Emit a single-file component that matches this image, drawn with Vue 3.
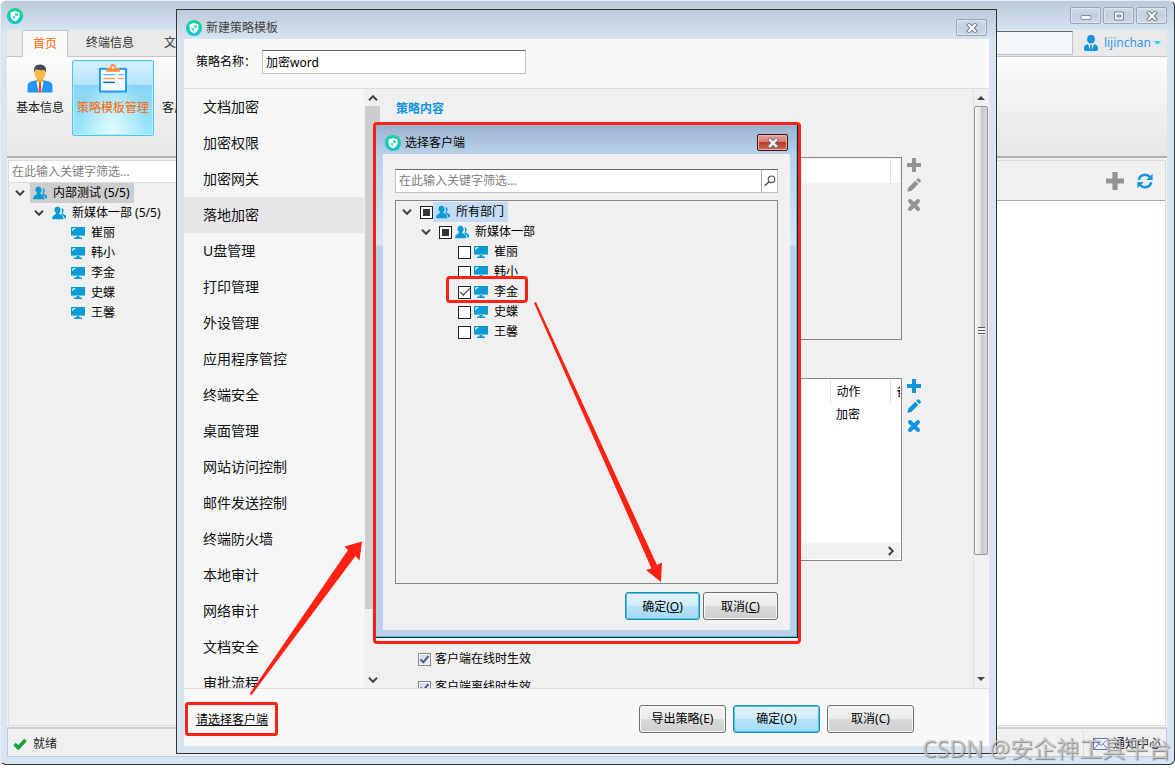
<template>
    <div class="desktop">
        <svg class="sprite" aria-hidden="true">
            <defs>
                <linearGradient id="teal" x1="0" y1="0" x2="0" y2="1">
                    <stop offset="0" stop-color="#12d690" />
                    <stop offset="1" stop-color="#0cc4d0" />
                </linearGradient>
            </defs>
            <symbol id="logo" viewBox="0 0 16 16">
                <circle cx="8" cy="8" r="8" fill="url(#teal)" />
                <path d="M8 3 L12.5 4.4 V8.2 Q12 11.5 8 13.4 Q4 11.5 3.5 8.2 V4.4Z" fill="#fff" />
                <path d="M8 5 L11 5.6 V8 H8Z M8 8 V11.4 Q5.8 10.2 5.2 8Z" fill="#4fdcc0" />
            </symbol>
            <symbol id="group" viewBox="0 0 14 14">
                <path d="M9.6 2 a2.4 2.6 0 0 1 0.8 4.9 q0.3 1.4 3.6 2.6 v3.1 h-1.4 q-0.2-2.8-3.2-3.9 q1.6-3.3 0.2-6.7z" fill="#0a9bd4" />
                <path d="M5.4 0.6 a3.3 3.5 0 0 1 1.7 6.5 q0.2 1.5 2.5 2.1 q1.9 0.8 1.9 4 h-11.5 q0-3.2 2-4 q2-0.6 2-2.1 a3.3 3.5 0 0 1 1.4-6.5z" fill="#0a9bd4" />
            </symbol>
            <symbol id="pc" viewBox="0 0 14 12">
                <path d="M0 0 H14 V9 H0Z M5.5 9 H8.5 V10.5 H11 V12 H3 V10.5 H5.5Z" fill="#0a9bd4" />
                <path d="M0 8 H14 V8.6 H0Z M1 4.5 L5 1 H2.2 L1 2.2Z" fill="#bde5f5" />
            </symbol>
            <symbol id="down" viewBox="0 0 10 6">
                <path d="M1 0.8 L5 4.8 L9 0.8" fill="none" stroke="#444" stroke-width="2" />
            </symbol>
            <symbol id="plus" viewBox="0 0 14 14">
                <path d="M5 0 H9 V5 H14 V9 H9 V14 H5 V9 H0 V5 H5Z" fill="currentColor" />
            </symbol>
            <symbol id="pen" viewBox="0 0 14 14">
                <path d="M0.3 13.8 L1.2 9.8 L8.3 2.8 L11.4 5.9 L4.3 12.9Z M9.2 1.9 L10.5 0.6 Q11.5 0 12.4 0.8 L13.5 1.9 Q14.3 2.8 13.5 3.8 L12.3 5Z" fill="currentColor" />
            </symbol>
            <symbol id="cross" viewBox="0 0 14 14">
                <path d="M3 3 L11 11 M11 3 L3 11" stroke="currentColor" stroke-width="4" stroke-linecap="round" />
            </symbol>
            <symbol id="winclose" viewBox="0 0 12 10">
                <path d="M3 2 L9 8 M9 2 L3 8" stroke="#69717f" stroke-width="4" stroke-linecap="square" />
                <path d="M3 2 L9 8 M9 2 L3 8" stroke="#f4f6f9" stroke-width="2.4" stroke-linecap="square" />
            </symbol>
        </svg>

        <!-- 主窗口 -->
        <div class="main-win">
            <div class="titlebar main-title">
                <svg class="logo"><use href="#logo" /></svg>
                <div class="win-btns">
                    <button class="win-btn" aria-label="最小化">
                        <svg width="12" height="10"><rect x="1" y="4.5" width="10" height="4" rx="1" fill="#f4f6f9" stroke="#858da0" /></svg>
                    </button>
                    <button class="win-btn" aria-label="最大化">
                        <svg width="12" height="10"><path d="M1.5 1 H10.5 V9 H1.5Z M4 4 V6 H8 V4Z" fill="#f4f6f9" fill-rule="evenodd" stroke="#7b8496" /></svg>
                    </button>
                    <button class="win-btn" aria-label="关闭">
                        <svg width="12" height="10"><use href="#winclose" /></svg>
                    </button>
                </div>
            </div>
            <div class="client-area">
                <div class="tabs">
                    <button class="tab on">首页</button>
                    <button class="tab">终端信息</button>
                    <button class="tab">文</button>
                    <input class="top-search" type="text" aria-label="搜索" />
                    <button class="user">
                        <svg width="14" height="16" viewBox="0 0 14 16">
                            <path d="M7 0 a3.8 4.2 0 0 1 0 8.6 a3.8 4.2 0 0 1 0-8.6z M4 9 L6 15 L6.2 11.5 L5.8 10 H8.2 L7.8 11.5 L8 15 L10 9 Q14 10 14 13.4 V14.5 Q14 16 12 16 H2 Q0 16 0 14.5 V13.4 Q0 10 4 9z" fill="#1095dc" />
                        </svg>
                        <span>lijinchan</span>
                        <svg width="7" height="4"><path d="M0 0 H7 L3.5 4Z" fill="#25dcf8" /></svg>
                    </button>
                </div>
                <div class="ribbon">
                    <button class="tool">
                        <svg width="26" height="28" viewBox="0 0 26 28">
                            <path d="M0.5 28 V22 Q0.5 17.5 5 16.7 L13 15 L21 16.7 Q25.5 17.5 25.5 22 V28Z" fill="#2196f3" />
                            <path d="M10 12 H16 V17 L13 20 L10 17Z" fill="#ffa726" />
                            <path d="M9.5 16.5 L13 19 L16.5 16.5 L14.5 28 H11.5Z" fill="#fff" />
                            <path d="M12 18 H14 L14.6 28 H11.4Z" fill="#e74c3c" />
                            <ellipse cx="13" cy="9" rx="5.5" ry="6.5" fill="#ffb74d" />
                            <path d="M7 8 Q6 0 13 0 Q20 0 19 8 L17.6 5.5 Q13 6 8.8 4.8Z" fill="#424b54" />
                        </svg>
                        <span>基本信息</span>
                    </button>
                    <button class="tool on">
                        <svg width="30" height="30" viewBox="0 0 30 30">
                            <rect x="1.5" y="5" width="27" height="23.5" fill="#f2fbff" stroke="#2196f3" stroke-width="2" />
                            <path d="M8 8 V4.5 H12 Q12 0 15 0 Q18 0 18 4.5 H22 V8Z" fill="#ff8a3c" />
                            <circle cx="15" cy="3.6" r="1.4" fill="#fff" />
                            <path d="M5 11 H17 M21 11 H26" stroke="#64b5f6" stroke-width="1.5" />
                            <path d="M5 15 H17 M20 15 H26" stroke="#ff9c55" stroke-width="1.5" />
                            <path d="M5 19 H17" stroke="#1c68a8" stroke-width="1.5" />
                        </svg>
                        <span>策略模板管理</span>
                    </button>
                    <button class="tool third"><span>客户</span></button>
                </div>
                <div class="work">
                    <div class="side">
                        <input class="side-search" type="text" placeholder="在此输入关键字筛选..." aria-label="筛选" />
                        <div class="row" v-for="item in mainTree" :class="'lv' + item.level">
                            <svg class="down" v-if="item.level < 3"><use href="#down" /></svg>
                            <span class="node" :class="{ sel: item.level == 1 }">
                                <svg class="ico-group" v-if="item.level < 3"><use href="#group" /></svg>
                                <svg class="ico-pc" v-else><use href="#pc" /></svg>
                                {{ item.name }}
                            </span>
                        </div>
                    </div>
                    <div class="panel">
                        <div class="panel-tools">
                            <button class="icon-btn gray" aria-label="新增"><svg width="18" height="18"><use href="#plus" /></svg></button>
                            <button class="icon-btn blue" aria-label="刷新">
                                <svg width="16" height="16" viewBox="0 0 16 16">
                                    <path d="M1.8 6.8 A6.3 6 0 0 1 13 4.2 M14.2 9.2 A6.3 6 0 0 1 3 11.8" fill="none" stroke="currentColor" stroke-width="2.4" />
                                    <path d="M15.6 0.8 V7 H9.4Z M0.4 15.2 V9 H6.6Z" fill="currentColor" />
                                </svg>
                            </button>
                        </div>
                    </div>
                </div>
                <div class="status">
                    <svg width="14" height="12" viewBox="0 0 14 12"><path d="M1.5 6 L5.3 9.8 L12.5 2" fill="none" stroke="#16a33a" stroke-width="3.6" /></svg>
                    <span>就绪</span>
                    <div class="notice">
                        <svg width="16" height="12" viewBox="0 0 16 12"><path d="M0.5 0.5 H15.5 V11.5 H0.5Z M0.5 0.5 L8 7.5 L15.5 0.5 M0.5 11.5 L6 5.8 M15.5 11.5 L10 5.8" fill="#eef4ff" stroke="#5b77bd" /></svg>
                        <span>通知中心</span>
                    </div>
                </div>
            </div>
        </div>

        <!-- 新建策略模板 -->
        <div class="dialog">
            <div class="titlebar">
                <svg class="logo"><use href="#logo" /></svg>
                <span class="title-text">新建策略模板</span>
                <button class="win-btn" aria-label="关闭"><svg width="12" height="10"><use href="#winclose" /></svg></button>
            </div>
            <div class="dialog-box">
                <div class="name-line">
                    <label for="policyName">策略名称：</label>
                    <input id="policyName" type="text" v-model="policyName" />
                </div>
                <div class="dialog-mid">
                    <div class="menu">
                        <button v-for="(m, index) in menus" class="menu-item" :class="{ on: index == current }" @click="current = index">{{ m }}</button>
                    </div>
                    <div class="flat-bar">
                        <svg class="down up"><use href="#down" /></svg>
                        <div class="flat-thumb"></div>
                        <svg class="down"><use href="#down" /></svg>
                    </div>
                    <div class="content">
                        <h3>策略内容</h3>
                        <div class="block">
                            <div class="list off">
                                <table>
                                    <thead><tr><th></th><th class="col-act plain"></th><th class="col-memo"></th></tr></thead>
                                </table>
                            </div>
                            <div class="ops gray">
                                <button class="icon-btn" v-for="o in ops" :aria-label="o.name"><svg width="14" height="14"><use :href="o.icon" /></svg></button>
                            </div>
                        </div>
                        <div class="block">
                            <div class="list">
                                <table>
                                    <thead><tr><th></th><th class="col-act">动作</th><th class="col-memo">备</th></tr></thead>
                                    <tbody><tr><td></td><td>加密</td><td></td></tr></tbody>
                                </table>
                                <div class="h-bar"><svg class="down right"><use href="#down" /></svg></div>
                            </div>
                            <div class="ops blue">
                                <button class="icon-btn" v-for="o in ops" :aria-label="o.name"><svg width="14" height="14"><use :href="o.icon" /></svg></button>
                            </div>
                        </div>
                        <div class="effects">
                            <label><input class="old-check" type="checkbox" v-model="online" />客户端在线时生效</label>
                            <label><input class="old-check" type="checkbox" v-model="offline" />客户端离线时生效</label>
                        </div>
                    </div>
                    <div class="aero-bar">
                        <svg width="8" height="4"><path d="M0 4 L4 0 L8 4Z" fill="#444" /></svg>
                        <div class="aero-thumb"><i></i></div>
                        <svg width="8" height="4"><path d="M0 0 H8 L4 4Z" fill="#444" /></svg>
                    </div>
                </div>
                <div class="dialog-foot">
                    <a class="pick" href="#">请选择客户端</a>
                    <button class="btn">导出策略(E)</button>
                    <button class="btn primary">确定(O)</button>
                    <button class="btn">取消(C)</button>
                </div>
            </div>
        </div>

        <!-- 选择客户端 -->
        <div class="mark-frame">
            <div class="picker">
                <div class="titlebar">
                    <svg class="logo"><use href="#logo" /></svg>
                    <span class="title-text">选择客户端</span>
                    <button class="win-btn red" aria-label="关闭"><svg width="12" height="10"><use href="#winclose" /></svg></button>
                </div>
                <div class="picker-box">
                    <div class="picker-search">
                        <input type="text" placeholder="在此输入关键字筛选..." aria-label="筛选客户端" />
                        <button aria-label="搜索">
                            <svg width="12" height="12" viewBox="0 0 12 12"><circle cx="7.5" cy="4.3" r="3.3" fill="none" stroke="#555" stroke-width="1.2" /><path d="M5 6.7 L0.8 10.8" stroke="#555" stroke-width="1.6" /></svg>
                        </button>
                    </div>
                    <div class="picker-tree">
                        <div class="row" v-for="item in clients" :class="['lv' + item.level, { marked: item.checked }]">
                            <svg class="down" v-if="item.level < 3"><use href="#down" /></svg>
                            <label>
                                <input class="check" type="checkbox" v-model="item.checked" :indeterminate.prop="item.level < 3" />
                                <span class="node" :class="{ sel: item.level == 1 }">
                                    <svg class="ico-group" v-if="item.level < 3"><use href="#group" /></svg>
                                    <svg class="ico-pc" v-else><use href="#pc" /></svg>
                                    {{ item.name }}
                                </span>
                            </label>
                        </div>
                    </div>
                    <div class="picker-foot">
                        <button class="btn primary">确定(<u>O</u>)</button>
                        <button class="btn">取消(<u>C</u>)</button>
                    </div>
                </div>
            </div>
        </div>

        <!-- 指引箭头 -->
        <svg class="arrows" width="1175" height="768" aria-hidden="true">
            <path d="M534 303 L536 302 L657 565 L662 562.5 L661 582 L646 570 L651.5 568.5Z" fill="#ff2113" />
            <path d="M249.5 694 L348 550 L344.5 546.5 L362 541.5 L359.5 560.5 L355.5 556 L251.5 695Z" fill="#ff2113" />
        </svg>
        <div class="watermark">CSDN @安企神工具平台</div>
    </div>
</template>

<script setup>
import { ref, reactive } from "vue"

const policyName = ref("加密word")
const current = ref(3)
const online = ref(true)
const offline = ref(true)

// 左侧策略菜单
const menus = [
    "文档加密", "加密权限", "加密网关", "落地加密", "U盘管理", "打印管理",
    "外设管理", "应用程序管控", "终端安全", "桌面管理", "网站访问控制",
    "邮件发送控制", "终端防火墙", "本地审计", "网络审计", "文档安全", "审批流程"
]

const ops = [
    { name: "添加", icon: "#plus" },
    { name: "编辑", icon: "#pen" },
    { name: "删除", icon: "#cross" }
]

// 主窗口的部门树
const mainTree = [
    { level: 1, name: "内部测试 (5/5)" },
    { level: 2, name: "新媒体一部 (5/5)" },
    { level: 3, name: "崔丽" },
    { level: 3, name: "韩小" },
    { level: 3, name: "李金" },
    { level: 3, name: "史蝶" },
    { level: 3, name: "王馨" }
]

// 可选择的客户端
const clients = reactive([
    { level: 1, name: "所有部门", checked: false },
    { level: 2, name: "新媒体一部", checked: false },
    { level: 3, name: "崔丽", checked: false },
    { level: 3, name: "韩小", checked: false },
    { level: 3, name: "李金", checked: true },
    { level: 3, name: "史蝶", checked: false },
    { level: 3, name: "王馨", checked: false }
])
</script>

<style>
body{
    margin: 0;
    background: #fff;
}
</style>

<style scoped>
.desktop, .desktop *, .desktop *::after{
    box-sizing: border-box;
}
.desktop{
    position: relative;
    display: flex;
    flex-direction: column;
    height: 100vh;
    padding-bottom: 3px;
    overflow: hidden;
    font: 12px/20px "Noto Sans", "Noto Sans CJK SC", sans-serif;
    color: #000;
}
.sprite{
    position: absolute;
    width: 0;
    height: 0;
}
button, input{
    font: inherit;
    color: inherit;
    margin: 0;
}
button{
    padding: 0;
    border: 0;
    background: none;
    white-space: nowrap;
}
svg{
    flex: none;
    display: block;
}
.logo{
    width: 16px;
    height: 16px;
}
.down{
    width: 10px;
    height: 6px;
}
.ico-group{
    width: 14px;
    height: 14px;
}
.ico-pc{
    width: 14px;
    height: 12px;
}
.gray{
    color: #939393;
}
.blue{
    color: #1296db;
}

/* 主窗口 */
.main-win{
    flex: 1;
    min-height: 0;
    display: flex;
    flex-direction: column;
    padding: 0 7px 7px 6px;
    background: #d7e4f2;
    border: 1px solid #333;
    border-top-color: #e6edf4;
    border-left-color: #e6edf4;
    border-radius: 6px;
    background-image: linear-gradient(#bccbd9, #d7e4f2 30px);
}
.titlebar{
    display: flex;
    align-items: center;
    height: 29px;
    flex: none;
}
.title-text{
    margin-left: 4px;
}
.win-btns{
    display: flex;
    gap: 2px;
    margin-left: auto;
}
.win-btn{
    display: flex;
    align-items: center;
    justify-content: center;
    width: 31px;
    height: 17px;
    margin-left: auto;
    border: 1px solid #9aa5b9;
    border-radius: 2px;
    background: linear-gradient(#cfdae6, #c3d0de 50%, #cddae8);
    box-shadow: inset 0 0 0 1px #dde6ef;
}
.win-btn.red{
    border-color: #4b1219;
    background: linear-gradient(#e3a79c, #d27b6d 50%, #bb3a22 50%, #cf6a50);
    box-shadow: inset 0 0 0 1px #e5b0a5;
}
.client-area{
    flex: 1;
    min-height: 0;
    display: flex;
    flex-direction: column;
    background: #f0f0f0;
}
.tabs{
    display: flex;
    align-items: flex-end;
    height: 27px;
    flex: none;
    padding-left: 15px;
    background: #e9e9e9;
    border-bottom: 1px solid #c5c5c5;
}
.tab{
    height: 26px;
    padding: 0 15px;
    color: #333;
}
.tab.on{
    height: 27px;
    margin-bottom: -1px;
    padding: 0 10px;
    background: #fafafa;
    border: 1px solid #c5c5c5;
    border-bottom: 0;
    border-radius: 2px 2px 0 0;
    color: #ff6600;
}
.tab.on + .tab{
    padding-left: 18px;
}
.top-search{
    width: 264px;
    height: 24px;
    margin: 0 11px 1px auto;
    border: 1px solid #c0c4ca;
    border-top: 1px solid #666;
    background: #f3f7fc;
}
.user{
    display: flex;
    align-items: center;
    gap: 6px;
    height: 26px;
    padding-right: 6px;
    color: #3399f0;
}
.user span{
    margin-right: -3px;
}
.ribbon{
    display: flex;
    align-items: flex-start;
    height: 101px;
    flex: none;
    padding: 3px 1px;
    background: linear-gradient(#fcfcfc, #f0f0f0 50%, #e6e6e6);
    border-bottom: 2px solid #b0b0b0;
}
.tool{
    display: flex;
    flex-direction: column;
    align-items: center;
    gap: 5px;
    width: 64px;
    height: 76px;
    padding-top: 4px;
    color: #222;
}
.tool svg{
    height: 29px;
}
.tool.on{
    width: 82px;
    border: 1px solid #4cc6ea;
    border-radius: 2px;
    padding-top: 3px;
    color: #ff6600;
    background: radial-gradient(ellipse at 50% 100%, #e2fbff, transparent 60%), linear-gradient(#d8f1fd, #b4e4f9 32%, #86d4f5 32%, #9fe6fb);
    box-shadow: inset 0 0 0 1px #b9ecfb;
}
.tool.third{
    width: 40px;
    padding-top: 38px;
}
.work{
    flex: 1;
    min-height: 0;
    display: grid;
    grid-template-columns: 200px 1fr;
    gap: 4px;
    padding: 2px 1px 1px;
}
.side{
    border: 1px solid #dcdcdc;
}
.side-search{
    display: block;
    width: 100%;
    height: 22px;
    padding: 0 3px;
    border: 0;
    border-bottom: 1px solid #ddd;
}
::placeholder{
    color: #808080;
    opacity: 1;
}
.row{
    display: flex;
    align-items: center;
    height: 20px;
    white-space: nowrap;
}
.node{
    display: flex;
    align-items: center;
    gap: 6px;
    height: 20px;
    padding: 0 4px 0 3px;
}
.side .row{
    gap: 5px;
    padding-left: 6px;
}
.side .row.lv2{
    padding-left: 25px;
}
.side .row.lv3{
    padding-left: 59px;
}
.side .sel{
    background: #cdcdcd;
}
.panel{
    display: flex;
    flex-direction: column;
    background: #fff;
    border: 1px solid #dcdcdc;
}
.panel-tools{
    display: flex;
    align-items: center;
    justify-content: flex-end;
    gap: 13px;
    height: 40px;
    padding-right: 12px;
    background: #f0f0f0;
    border-bottom: 1px solid #a8a8a8;
}
.status{
    display: flex;
    align-items: center;
    gap: 6px;
    height: 30px;
    flex: none;
    padding: 2px 0 0 5px;
    color: #222;
    border: 1px solid #b9cee5;
    border-top: 2px solid #d0d0d0;
}
.notice{
    display: flex;
    align-items: center;
    gap: 4px;
    height: 100%;
    margin-left: auto;
    padding: 0 5px 0 9px;
    border-left: 1px solid #ddd;
}

/* 新建策略模板窗口 */
.dialog{
    position: absolute;
    top: 9px;
    left: 176px;
    right: 178px;
    bottom: 14px;
    display: flex;
    flex-direction: column;
    padding: 0 7px 7px;
    border: 1px solid #333;
    background: linear-gradient(#bccad9, #d7e4f2 30px);
}
.dialog > .titlebar{
    padding: 6px 2px 0;
    color: #444;
}
.dialog-box{
    flex: 1;
    min-height: 0;
    display: flex;
    flex-direction: column;
    background: #f8f8f8;
}
.name-line{
    display: flex;
    align-items: center;
    gap: 6px;
    height: 50px;
    flex: none;
    padding: 0 12px 4px;
    border-bottom: 1px solid #ddd;
}
.name-line input{
    width: 264px;
    height: 24px;
    padding: 0 3px;
    border: 1px solid #bfc3c8;
    border-top-color: #666;
    background: #fff;
}
.dialog-mid{
    flex: 1;
    min-height: 0;
    display: flex;
    overflow: hidden;
    background: #f0f0f0;
}
.menu{
    width: 180px;
    flex: none;
    overflow: hidden;
    background: #f4f6f8;
}
.menu-item{
    display: block;
    width: 100%;
    height: 36px;
    padding-left: 19px;
    text-align: left;
    font-size: 14px;
    color: #111;
}
.menu-item.on{
    background: #e5e6e8;
}
.flat-bar{
    display: flex;
    flex-direction: column;
    align-items: center;
    width: 15px;
    margin-left: 1px;
    padding: 6px 0 5px;
}
.flat-thumb{
    width: 15px;
    flex: 1;
    margin: 5px 0 68px;
    background: #cdcdcd;
}
.up{
    transform: rotate(180deg);
}
.content{
    flex: 1;
    overflow: hidden;
    padding: 10px 52px 0 16px;
}
.content h3{
    margin: 0;
    font-size: 12px;
    line-height: 20px;
    color: #1296db;
}
.block{
    display: flex;
    gap: 5px;
    margin-top: 38px;
}
.list{
    flex: 1;
    display: flex;
    flex-direction: column;
    height: 183px;
    padding: 1px;
    border: 1px solid #828790;
    background: #fff;
}
.list.off{
    background: #f0f0f0;
}
table{
    width: 100%;
    table-layout: fixed;
    border-collapse: collapse;
}
th, td{
    height: 24px;
    padding: 0 0 0 6px;
    text-align: left;
    font-weight: normal;
    overflow: hidden;
    white-space: nowrap;
}
th{
    border-left: 1px solid #e0e0e0;
    background: #fff;
}
th:first-child, th.plain{
    border-left: 0;
}
td{
    height: 22px;
}
.col-act{
    width: 60px;
}
.col-memo{
    width: 10px;
}
.h-bar{
    display: flex;
    align-items: center;
    justify-content: flex-end;
    height: 16px;
    margin-top: auto;
    padding-right: 4px;
    background: #f0f0f0;
}
.right{
    transform: rotate(-90deg);
}
.ops{
    display: flex;
    flex-direction: column;
    gap: 6px;
    padding-top: 1px;
}
.icon-btn{
    color: inherit;
}
.icon-btn.gray{
    color: #939393;
}
.icon-btn.blue{
    color: #1296db;
}
.effects{
    display: flex;
    flex-direction: column;
    gap: 8px;
    margin-top: 88px;
    padding-left: 22px;
}
.effects label{
    display: flex;
    align-items: center;
    gap: 4px;
}
.old-check{
    appearance: none;
    width: 13px;
    height: 13px;
    border: 1px solid #8a8a8a;
    background: linear-gradient(135deg, #cfd6df, #f4f6f8);
    box-shadow: inset 0 0 0 1px #f4f4f4;
}
.old-check:checked::after{
    content: "";
    display: block;
    width: 5px;
    height: 9px;
    margin: 0 auto;
    border: solid #4a5f97;
    border-width: 0 2px 2px 0;
    transform: rotate(40deg);
}
.aero-bar{
    display: flex;
    flex-direction: column;
    align-items: center;
    width: 16px;
    padding: 7px 1px 7px 0;
    border-left: 1px solid #e2e2e2;
}
.aero-thumb{
    display: flex;
    align-items: center;
    justify-content: center;
    flex: 1;
    width: 14px;
    margin: 6px 0 122px;
    border: 1px solid #979797;
    border-radius: 2px;
    background: linear-gradient(90deg, #f5f5f5, #e6e6e8 45%, #c8c8cc 50%, #d8d8da);
}
.aero-thumb i{
    width: 7px;
    height: 8px;
    background: repeating-linear-gradient(#555 0 1px, #f0f0f0 1px 3px);
}
.dialog-foot{
    display: flex;
    align-items: center;
    gap: 7px;
    height: 58px;
    flex: none;
    padding: 2px 75px 0 1px;
    border-top: 1px solid #ddd;
}
.pick{
    margin-right: auto;
    padding: 5px 7px 3px 8px;
    line-height: 20px;
    border: 3px solid #ff2113;
    border-radius: 3px;
    color: #000;
}
.btn{
    width: 87px;
    height: 28px;
    padding-top: 1px;
    border: 1px solid #707070;
    border-radius: 3px;
    background: linear-gradient(#f3f3f3, #ebebeb 48%, #dadada 50%, #cfcfcf);
    box-shadow: inset 0 0 0 1px #f6f6f6;
}
.btn.primary{
    border-color: #3a7fb1;
    background: linear-gradient(#e4f4fc, #cfecfb 48%, #b7e3fa 50%, #a6daf7);
    box-shadow: inset 0 0 0 1px #36cdf3;
}

/* 选择客户端窗口 */
.mark-frame{
    position: absolute;
    top: 122px;
    left: 373px;
    width: 428px;
    height: 522px;
    padding-bottom: 3px;
    border: 3px solid #ff2113;
    border-radius: 4px;
    background: #f4f4f4;
}
.picker{
    display: flex;
    flex-direction: column;
    height: 100%;
    padding: 0 7px;
    padding-bottom: 7px;
    border-right: 1px solid #223;
    border-bottom: 1px solid #223;
    box-shadow: inset -1px -1px 0 #35cdeb;
    background: linear-gradient(#99b3cf, #b9d1ea 30px, #d8e6f5 120px, #b9d1ea 121px);
}
.picker .titlebar{
    padding: 6px 2px 0;
}
.picker-box{
    flex: 1;
    min-height: 0;
    display: flex;
    flex-direction: column;
    padding: 15px 12px 10px;
    background: #f0f0f0;
}
.picker-search{
    display: flex;
    height: 24px;
    flex: none;
    border: 1px solid #c0c0c0;
    border-top-color: #666;
    background: #fff;
}
.picker-search input{
    flex: 1;
    min-width: 0;
    padding: 0 3px;
    border: 0;
    background: none;
}
.picker-search button{
    display: flex;
    align-items: center;
    justify-content: center;
    width: 16px;
    border-left: 1px solid #aaa;
}
.picker-tree{
    flex: 1;
    margin: 7px 0 8px;
    padding: 1px 0 0 6px;
    border: 1px solid #828790;
}
.picker-tree .row{
    position: relative;
    gap: 8px;
}
.picker-tree .lv2{
    padding-left: 19px;
}
.picker-tree .lv3{
    padding-left: 56px;
}
.picker-tree label{
    display: flex;
    align-items: center;
}
.picker-tree .sel{
    background: #c3dcf3;
}
.marked::after{
    content: "";
    position: absolute;
    left: 44px;
    top: -6px;
    width: 82px;
    height: 27px;
    border: 3px solid #ff2113;
    border-radius: 4px;
    pointer-events: none;
}
.check{
    appearance: none;
    display: flex;
    align-items: center;
    justify-content: center;
    width: 13px;
    height: 13px;
    border: 1px solid #222;
    background: #fff;
}
.check:indeterminate::after{
    content: "";
    width: 7px;
    height: 7px;
    background: #333;
}
.check:checked::after{
    content: "";
    width: 10px;
    height: 5px;
    margin-bottom: 3px;
    border: solid #333;
    border-width: 0 0 1px 1px;
    transform: rotate(-45deg);
}
.picker-foot{
    display: flex;
    justify-content: flex-end;
    gap: 3px;
}
.picker-foot .btn{
    width: 75px;
}

/* 标注层 */
.arrows{
    position: absolute;
    top: 0;
    left: 0;
    pointer-events: none;
}
.watermark{
    position: absolute;
    right: 4px;
    bottom: 5px;
    font-size: 23px;
    line-height: 30px;
    color: rgba(205, 205, 205, 0.8);
    text-shadow: 1px 1px 1px rgba(90, 90, 90, 0.7);
    pointer-events: none;
}
</style>
